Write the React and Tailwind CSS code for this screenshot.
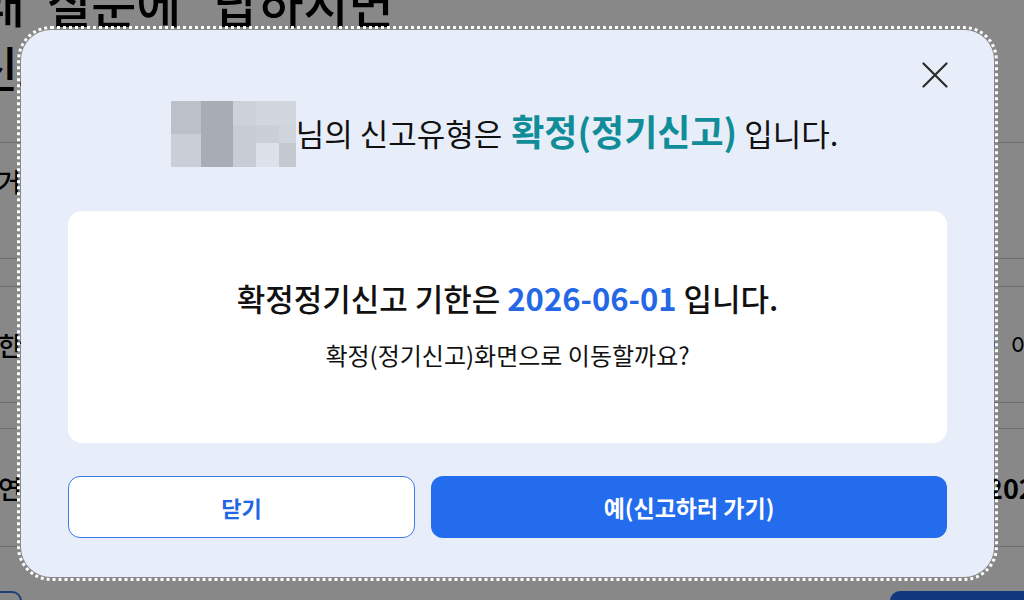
import React from 'react';

const NameBlur = () => (
  <svg width="125" height="66" viewBox="0 0 125 66" className="shrink-0">
    <rect x="0" y="0" width="30" height="33" fill="#bcc1c9" />
    <rect x="0" y="33" width="30" height="33" fill="#c9ced7" />
    <rect x="30" y="0" width="32" height="66" fill="#a8acb4" />
    <rect x="62" y="0" width="23" height="24" fill="#cdd2da" />
    <rect x="62" y="24" width="23" height="42" fill="#c8cdd5" />
    <rect x="85" y="0" width="40" height="24" fill="#d2d6de" />
    <rect x="85" y="24" width="23" height="18" fill="#cbd0d8" />
    <rect x="85" y="42" width="23" height="24" fill="#dde2ea" />
    <rect x="108" y="24" width="17" height="18" fill="#d0d5dc" />
    <rect x="108" y="42" width="17" height="24" fill="#c4c9d0" />
  </svg>
);

const CloseIcon = () => (
  <svg width="26" height="26" viewBox="0 0 26 26" fill="none">
    <path d="M1.5 1.5 L24.5 24.5 M24.5 1.5 L1.5 24.5" stroke="#2b2b2b" strokeWidth="2.2" strokeLinecap="round" />
  </svg>
);

// page behind the dimmed overlay
const BackgroundPage = () => (
  <div className="w-[1024px] h-[600px] overflow-hidden bg-[#888888] text-black">
    <div className="-mt-[28px] flex whitespace-nowrap text-[49px] leading-[60px] font-medium">
      <span className="-ml-[65px] shrink-0">아래</span>
      <span className="ml-[21px] shrink-0">질문에</span>
      <span className="ml-[32px] shrink-0">답하시면</span>
    </div>
    <div className="mt-[4px] -ml-[26px] whitespace-nowrap text-[48px] leading-[60px] font-medium">
      신고유형을 확인해 보세요
    </div>

    <div className="mt-[46px] h-[117px] border-y border-[#6e6e6e] flex items-start pt-[22px]">
      <span className="-ml-[3px] shrink-0 whitespace-nowrap text-[26px] leading-[32px] font-medium">거주자 여부</span>
    </div>
    <div className="mt-[27px] h-[117px] border-y border-[#6e6e6e] flex items-center">
      <span className="-ml-[2px] w-[972px] shrink-0 whitespace-nowrap text-[26px] leading-[32px] font-medium">한도 초과 여부</span>
      <span className="w-[25px] h-[25px] shrink-0 rounded-full border border-[#2d4f95]" />
      <span className="ml-[16px] shrink-0 whitespace-nowrap text-[24px] leading-[32px]">아니오</span>
    </div>
    <div className="mt-[25px] h-[119px] border-y border-[#6e6e6e] flex items-center">
      <span className="-ml-[2px] w-[989px] shrink-0 whitespace-nowrap text-[26px] leading-[32px] font-medium">연간 수입금액</span>
      <span className="shrink-0 whitespace-nowrap text-[27px] leading-[36px] font-bold">2025년</span>
    </div>

    <div className="mt-[44px] flex">
      <div className="-ml-[100px] w-[122px] h-[50px] shrink-0 rounded-[10px] border-2 border-[#1f3f7c]" />
      <div className="ml-auto w-[160px] h-[50px] -mr-[26px] shrink-0 rounded-[10px] bg-[#12397f]" />
    </div>
  </div>
);

export default function App() {
  return (
    <div className="relative w-[1024px] h-[600px] overflow-hidden font-['Noto_Sans_CJK_KR','Noto_Sans',sans-serif]">
      <BackgroundPage />

      {/* overlay with the modal */}
      <div className="absolute inset-0 pl-[21px] pt-[30px]">
        <div className="relative w-[973px] h-[547px] rounded-[30px] bg-[#e8eef9] outline-3 outline-dotted outline-white outline-offset-1 flex flex-col px-[47px] pt-[71px] pb-[39px]">
          <button className="absolute right-[46px] top-[32px]">
            <CloseIcon />
          </button>

          <div className="h-[66px] pr-[6px] flex items-center justify-center text-[#111111]">
            <NameBlur />
            <p className="-mt-[6px] text-[31px] leading-[44px] whitespace-nowrap">
              님의 신고유형은{' '}
              <span className="ml-[2px] text-[36px] font-bold text-[#108d98]">확정(정기신고)</span>
              {' '}입니다.
            </p>
          </div>

          <div className="mt-[44px] h-[232px] rounded-[14px] bg-white flex flex-col items-center pt-[67px] text-[#111111]">
            <p className="text-[31px] leading-[40px] font-medium whitespace-nowrap">
              확정정기신고 기한은 <span className="font-bold text-[#2468e6]">2026-06-01</span> 입니다.
            </p>
            <p className="mt-[21px] text-[24px] leading-[32px] whitespace-nowrap">확정(정기신고)화면으로 이동할까요?</p>
          </div>

          <div className="mt-[33px] h-[62px] flex gap-4">
            <button className="w-[347px] shrink-0 h-full rounded-[12px] border border-[#3a7ae8] bg-white text-[22px] font-bold text-[#2166e5]">
              닫기
            </button>
            <button className="flex-1 h-full rounded-[12px] bg-[#236ced] text-[23px] font-bold text-white">
              예(신고하러 가기)
            </button>
          </div>
        </div>
      </div>
    </div>
  );
}
